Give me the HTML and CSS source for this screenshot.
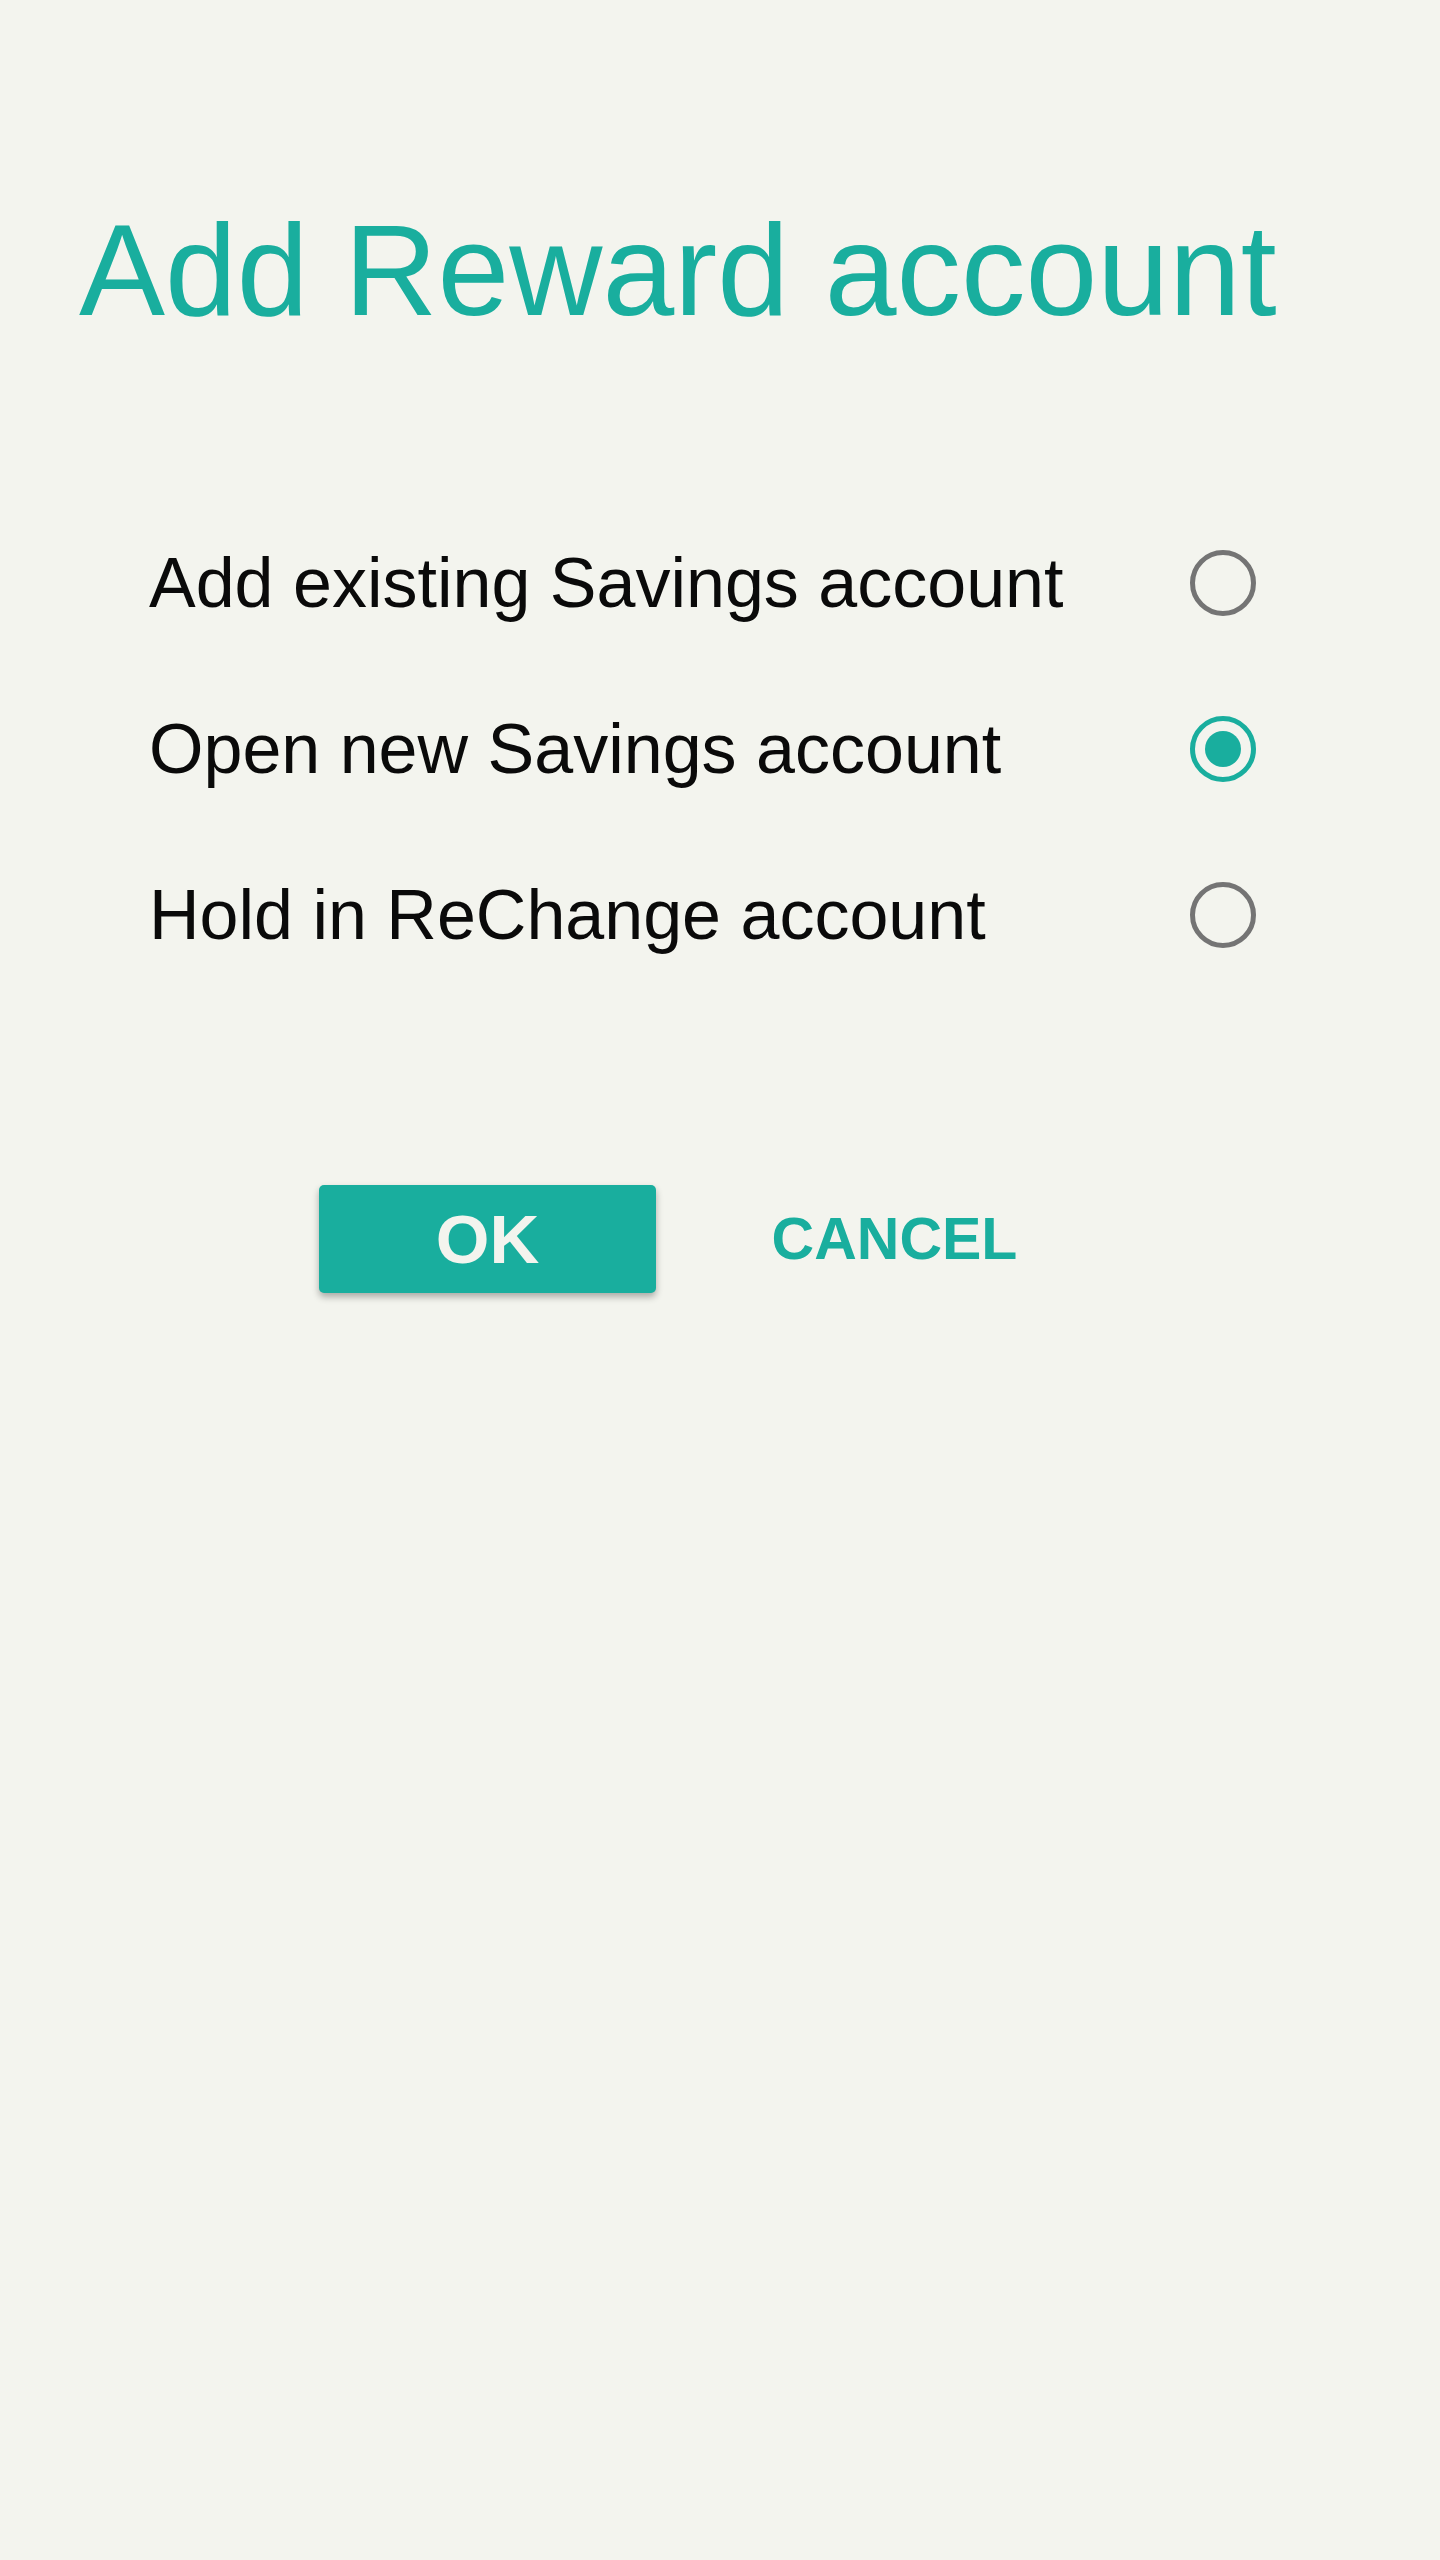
FILE: index.html
```html
<!DOCTYPE html>
<html lang="en">
<head>
<meta charset="utf-8">
<title>Add Reward account</title>
<link rel="stylesheet" href="styles.css">
</head>
<body>
<main class="dialog">
  <h1 class="title">Add Reward account</h1>
  <ul class="options">
    <li class="option">
      <span class="label">Add existing Savings account</span>
      <span class="radio"></span>
    </li>
    <li class="option">
      <span class="label">Open new Savings account</span>
      <span class="radio radio-checked"><span class="dot"></span></span>
    </li>
    <li class="option">
      <span class="label">Hold in ReChange account</span>
      <span class="radio"></span>
    </li>
  </ul>
  <div class="actions">
    <button class="btn btn-ok">OK</button>
    <button class="btn btn-cancel">CANCEL</button>
  </div>
</main>
</body>
</html>
```

FILE: styles.css
```css
html, body {
  margin: 0;
  padding: 0;
  background: #f3f4ee;
}

body {
  font-family: "Liberation Sans", Arial, sans-serif;
  min-height: 2560px;
}

.dialog {
  padding-top: 206px;
}

.title {
  margin: 0;
  padding-left: 79px;
  font-size: 129px;
  line-height: 129px;
  font-weight: 400;
  color: #19ae9e;
}

.options {
  list-style: none;
  margin: 165px 0 0 0;
  padding: 0 0 0 149px;
}

.option {
  display: flex;
  align-items: center;
  height: 166px;
}

.label {
  font-size: 70px;
  line-height: 70px;
  color: #0a0a0a;
  width: 1041px;
}

.radio {
  box-sizing: border-box;
  width: 66px;
  height: 66px;
  border: 5px solid #747474;
  border-radius: 50%;
  display: flex;
  align-items: center;
  justify-content: center;
}

.radio-checked {
  border-color: #19ae9e;
}

.dot {
  width: 36px;
  height: 36px;
  border-radius: 50%;
  background: #19ae9e;
}

.actions {
  display: flex;
  gap: 70px;
  margin-top: 187px;
  padding-left: 319px;
}

.btn {
  width: 337px;
  height: 108px;
  border: none;
  font-family: "Liberation Sans", Arial, sans-serif;
  font-weight: 700;
  padding: 0;
  cursor: pointer;
}

.btn-ok {
  background: #19ae9e;
  color: #f3f4ee;
  font-size: 69px;
  border-radius: 5px;
  box-shadow: 0 4px 7px rgba(0, 0, 0, 0.3);
}

.btn-cancel {
  background: transparent;
  color: #19ae9e;
  font-size: 59px;
}
```
